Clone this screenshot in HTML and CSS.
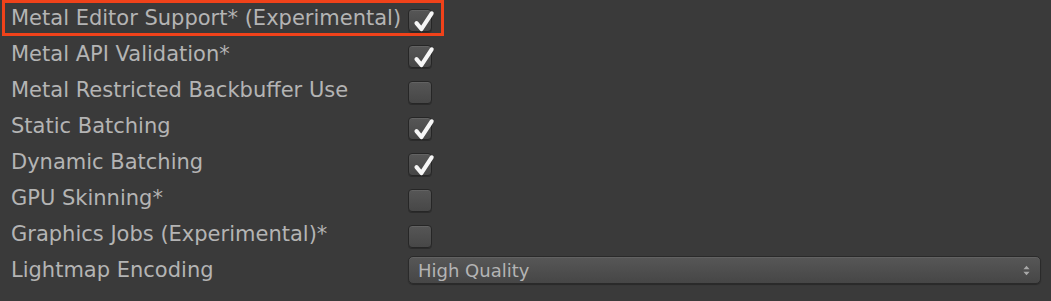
FILE: index.html
```html
<!DOCTYPE html>
<html>
<head>
<meta charset="utf-8">
<link rel="stylesheet" href="styles.css">
</head>
<body>
<div class="panel">
  <div class="row highlight">
    <span class="label">Metal Editor Support* (Experimental)</span>
    <span class="check on"><svg viewBox="0 0 24 24" class="tick"><path d="M6 13 L10.5 18.5 L20 4" /></svg></span>
  </div>
  <div class="row">
    <span class="label">Metal API Validation*</span>
    <span class="check on"><svg viewBox="0 0 24 24" class="tick"><path d="M6 13 L10.5 18.5 L20 4" /></svg></span>
  </div>
  <div class="row">
    <span class="label">Metal Restricted Backbuffer Use</span>
    <span class="check"></span>
  </div>
  <div class="row">
    <span class="label">Static Batching</span>
    <span class="check on"><svg viewBox="0 0 24 24" class="tick"><path d="M6 13 L10.5 18.5 L20 4" /></svg></span>
  </div>
  <div class="row">
    <span class="label">Dynamic Batching</span>
    <span class="check on"><svg viewBox="0 0 24 24" class="tick"><path d="M6 13 L10.5 18.5 L20 4" /></svg></span>
  </div>
  <div class="row">
    <span class="label">GPU Skinning*</span>
    <span class="check"></span>
  </div>
  <div class="row">
    <span class="label">Graphics Jobs (Experimental)*</span>
    <span class="check"></span>
  </div>
  <div class="row">
    <span class="label">Lightmap Encoding</span>
    <div class="select">
      <span class="select-text">High Quality</span>
      <svg class="arrows" viewBox="0 0 8 12"><path d="M4 0.5 L7.5 4.5 L0.5 4.5 Z M4 11.5 L7.5 7.5 L0.5 7.5 Z"/></svg>
    </div>
  </div>
</div>
</body>
</html>
```

FILE: styles.css
```css
html, body {
  margin: 0;
  padding: 0;
  background: #3a3a3a;
}
.panel {
  padding-top: 1px;
  font-family: "DejaVu Sans", "Liberation Sans", sans-serif;
  font-size: 21px;
  color: #b4b4b4;
}
.row {
  display: flex;
  align-items: center;
  height: 36px;
}
.label {
  box-sizing: border-box;
  width: 408px;
  padding-left: 11px;
  white-space: nowrap;
  flex: none;
}
.row.highlight {
  box-sizing: border-box;
  width: 442px;
  margin-left: 2px;
  border: 3px solid #f0421a;
  height: 36px;
  margin-top: -1px;
}
.row.highlight .label {
  width: 403px;
  padding-left: 6px;
}
.check {
  box-sizing: border-box;
  position: relative;
  width: 24px;
  height: 23px;
  margin-top: 5px;
  border-radius: 4px;
  border: 1px solid #262626;
  background: linear-gradient(#565656, #474747);
  box-shadow: inset 0 1px 0 rgba(255,255,255,0.08), 0 1px 0 rgba(0,0,0,0.25);
  flex: none;
}
.tick {
  position: absolute;
  left: 1px;
  top: -1px;
  width: 26px;
  height: 26px;
}
.tick path {
  fill: none;
  stroke: #f6f6f6;
  stroke-width: 3.8;
  stroke-linecap: round;
  stroke-linejoin: round;
}
.select {
  box-sizing: border-box;
  width: 633px;
  height: 28px;
  border-radius: 5px;
  border: 1px solid #2a2a2a;
  background: linear-gradient(#575757, #464646);
  box-shadow: inset 0 1px 0 rgba(255,255,255,0.07), 0 1px 1px rgba(0,0,0,0.3);
  display: flex;
  align-items: center;
  justify-content: space-between;
  padding: 0 10px 0 9px;
  flex: none;
}
.select-text {
  font-size: 18px;
  color: #b4b4b4;
}
.arrows {
  width: 7px;
  height: 11px;
}
.arrows path {
  fill: #a8a8a8;
}
```
